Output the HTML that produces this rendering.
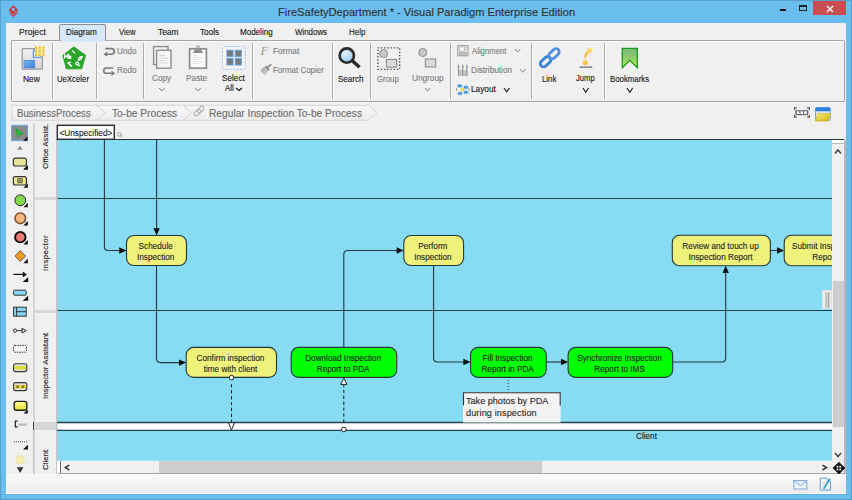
<!DOCTYPE html>
<html><head><meta charset="utf-8"><title>VP</title>
<style>
*{margin:0;padding:0;box-sizing:border-box}
html,body{width:852px;height:500px;overflow:hidden;background:#6abeee;font-family:"Liberation Sans",sans-serif;-webkit-text-stroke:0.12px}
.a{position:absolute}
.t{position:absolute;white-space:nowrap;line-height:12px;height:12px;font-size:7.9px;color:#1f1f1f}
.g{color:#8c8c8c}
.sep{position:absolute;top:43px;width:2px;height:55.5px;background:#adadad;border-right:1px solid #fbfbfb}
.chev{position:absolute;width:5px;height:5px;border-right:1.2px solid #444;border-bottom:1.2px solid #444;transform:rotate(45deg)}
.chev.g2{border-color:#9a9a9a}
.bc{position:absolute;white-space:nowrap;line-height:14px;height:14px;font-size:10px;color:#6e6e6e}
.dt{position:absolute;white-space:nowrap;font-size:8.2px;line-height:11px;color:#262626;text-align:center}
.vt{position:absolute;white-space:nowrap;font-size:7.9px;line-height:10px;color:#222;transform:rotate(-90deg);transform-origin:0 0}
</style></head><body>
<!-- window frame -->
<div class="a" style="left:0;top:0;width:852px;height:500px;background:#6abeee;border:1px solid #5b9fcc"></div>
<!-- title bar -->
<svg class="a" style="left:8px;top:4px" width="12" height="14" viewBox="8 4 12 14">
<path d="M13.4 5.3 L18 9.9 L13.4 14.5 L8.8 9.9 Z" fill="#db2a2a"/>
<path d="M13.2 7.3 L15.3 9.4 L13.2 11.5 L11.1 9.4 Z" fill="#6abeee"/>
<path d="M14.6 10.6 L16 11.4 L15 12.4 Z" fill="#6abeee"/>
<path d="M9.2 11.6 L13.4 15.8 L17.6 11.6" fill="none" stroke="#d83030" stroke-width="1"/>
<path d="M9.8 13.2 L13.4 16.8 L17 13.2" fill="none" stroke="#d83030" stroke-width="1"/>
</svg>
<div class="a" style="left:277.51px;top:4.96px;font-size:10.5px;line-height:14px;white-space:nowrap;color:#2e2e2e;transform:scaleX(1.057);transform-origin:0 0;">FireSafetyDepartment * - Visual Paradigm Enterprise Edition</div>
<div class="a" style="left:780px;top:9px;width:6px;height:2px;background:#111"></div>
<div class="a" style="left:799px;top:5px;width:8px;height:6px;border:1px solid #222;border-top-width:2px"></div>
<div class="a" style="left:813px;top:1px;width:34px;height:14px;background:#c74f4f"></div>
<svg class="a" style="left:826px;top:5px" width="8" height="8" viewBox="0 0 8 8"><path d="M1 1L7 7M7 1L1 7" stroke="#fff" stroke-width="1.4"/></svg>

<!-- content -->
<div class="a" style="left:6px;top:23px;width:840px;height:471px;background:#f0f0f0"></div>
<!-- tabs -->
<div class="a" style="left:59.2px;top:23.8px;width:46.8px;height:17.5px;background:#d6e7fa;border:1.3px solid #8e8e8e;border-bottom:none;border-radius:2.5px 2.5px 0 0"></div>


<!-- ribbon -->
<div class="a" style="left:11px;top:40px;width:834px;height:62px;border:1px solid #a2a2a2;border-top:1.5px solid #a4a4a4;border-bottom:1.5px solid #9c9c9c;border-radius:2px;background:#f0f0f0;box-shadow:0 1px 0 #fcfcfc, inset 1px 1px 0 #fbfbfb"></div>
<div class="a" style="left:60.5px;top:40px;width:44.2px;height:1.6px;background:#d6e7fa"></div>
<div class="sep" style="left:52px"></div>
<div class="sep" style="left:96px"></div>
<div class="sep" style="left:143px"></div>
<div class="sep" style="left:252px"></div>
<div class="sep" style="left:332px"></div>
<div class="sep" style="left:370px"></div>
<div class="sep" style="left:450px"></div>
<div class="sep" style="left:531px"></div>
<div class="sep" style="left:604px"></div>

<!-- New -->
<svg class="a" style="left:20px;top:45px" width="26" height="27" viewBox="20 45 26 27">
<defs><linearGradient id="gN" x1="0" y1="0" x2="0" y2="1"><stop offset="0" stop-color="#f3f3f3"/><stop offset="1" stop-color="#d2d2d2"/></linearGradient>
<linearGradient id="gB" x1="0" y1="0" x2="1" y2="1"><stop offset="0" stop-color="#7fb6f0"/><stop offset="1" stop-color="#3a7fd6"/></linearGradient></defs>
<rect x="22.2" y="48.6" width="20.2" height="20.6" rx="1" fill="url(#gN)" stroke="#9a9a9a" stroke-width="1.3"/>
<rect x="24" y="60.4" width="10.8" height="7.5" fill="url(#gB)" stroke="#3d7fd0" stroke-width=".6"/>
<rect x="33.4" y="50.3" width="7.6" height="7" fill="#e8f0fa" stroke="#4a8de0" stroke-width="1.1"/>
<rect x="35" y="46.6" width="9.4" height="9.6" fill="#fff6c0"/>
<g fill="#f0ac00"><rect x="35" y="46.6" width="2" height="2"/><rect x="38.7" y="46.6" width="2" height="2"/><rect x="42.4" y="46.6" width="2" height="2"/>
<rect x="35" y="50.4" width="2" height="2"/><rect x="38.7" y="50.4" width="2" height="2"/><rect x="42.4" y="50.4" width="2" height="2"/>
<rect x="35" y="54.2" width="2" height="2"/><rect x="38.7" y="54.2" width="2" height="2"/><rect x="42.4" y="54.2" width="2" height="2"/></g>
<g stroke="#f5c84a" stroke-width=".6"><path d="M35 49.5H44.4M35 53.3H44.4M36 46.6V56.2M39.7 46.6V56.2M43.4 46.6V56.2"/></g>
</svg>
<!-- UeXceler -->
<svg class="a" style="left:60px;top:45px" width="28" height="26" viewBox="60 45 28 26">
<path d="M73.9 46.9 L85.6 55.3 L81.7 68.8 L66.4 68.8 L62.8 55.3 Z" fill="#2aa52a" stroke="#2aa52a" stroke-width="1" stroke-linejoin="round"/>
<g fill="none" stroke="#fff" stroke-width="1.3"><path d="M72.2 50.6 L75 53.4"/><path d="M67.6 62.2 L71.8 66.6" stroke-width="1.8"/><path d="M70.6 61.6 L68.6 63.8"/><circle cx="77.3" cy="63.5" r="1.4"/><path d="M78.3 64.6 L80 66.2"/><path d="M78.5 60 Q79 56.6 82 56.6 Q81.5 59.8 78.5 60 Z"/></g>
<path d="M64.6 58.6 V54.8 L66.2 57 L67.8 54.8 V58.6 M69 54.4 V58.4 H70.8 V56.4 H69" fill="none" stroke="#fff" stroke-width="1.1"/>
</svg>
<!-- Undo / Redo -->
<svg class="a" style="left:102px;top:46px" width="15" height="31" viewBox="102 46 15 31">
<g fill="none" stroke="#7a7a7a" stroke-width="1.6"><path d="M105.2 48.6 H111.6 A2.8 2.8 0 0 1 111.6 54.2 H106.5"/><path d="M113.4 68 H106.4 A2.65 2.65 0 0 0 106.4 73.3 H111.5"/></g>
<path d="M103.5 54.2 L107.2 51.6 L107.2 56.8 Z" fill="#7a7a7a"/>
<path d="M115.2 73.3 L111.5 70.7 L111.5 75.9 Z" fill="#7a7a7a"/>
</svg>
<!-- Copy -->
<svg class="a" style="left:151px;top:45px" width="22" height="25" viewBox="151 45 22 25">
<rect x="153.6" y="46.6" width="14.4" height="17.8" fill="#f3f3f3" stroke="#8c8c8c" stroke-width="1.4"/>
<rect x="156.6" y="50.3" width="14.4" height="17.9" fill="#f6f6f6" stroke="#8c8c8c" stroke-width="1.4"/>
<g stroke="#c4c4c4" stroke-width=".7"><path d="M159.5 55.5H164.5M159.5 58H168M159.5 60.5H165M159.5 63H168"/></g>
</svg>
<!-- Paste -->
<svg class="a" style="left:187px;top:44px" width="22" height="27" viewBox="187 44 22 27">
<rect x="189.6" y="48.8" width="16.8" height="19.4" fill="#fafafa" stroke="#8c8c8c" stroke-width="1.7"/>
<path d="M193 53 L194.8 49.5 L201.2 49.5 L203 53 Z" fill="#8c8c8c"/>
<circle cx="198" cy="47.4" r="1.4" fill="none" stroke="#8c8c8c" stroke-width="1"/>
<g stroke="#d2d2d2" stroke-width=".6"><path d="M193 55.5H197M193 57.5H202M193 59.5H200M193 61.5H202M193 63.5H199"/></g>
</svg>
<!-- Select All -->
<svg class="a" style="left:221px;top:45px" width="26" height="26" viewBox="221 45 26 26">
<rect x="222.4" y="46.5" width="22.8" height="22.8" rx="1.5" fill="#f5f5f5" stroke="#a6c2ee" stroke-width="1" stroke-dasharray="2.2 1.3"/>
<g fill="#7a7a7a" stroke="#5ea2e6" stroke-width=".9"><rect x="226.9" y="50.2" width="6.2" height="6.5"/><rect x="235.2" y="50.2" width="6.2" height="6.5"/><rect x="226.9" y="58.5" width="6.2" height="6.5"/><rect x="235.2" y="58.5" width="6.2" height="6.5"/></g>
</svg>
<!-- Format F -->
<div class="a" style="left:260.6px;top:43.6px;font-family:'Liberation Serif',serif;font-style:italic;font-size:12.6px;line-height:14px;color:#9a9a9a;-webkit-text-stroke:0">F</div>
<!-- Format copier -->
<svg class="a" style="left:259px;top:64px" width="14" height="13" viewBox="259 64 14 13">
<defs><linearGradient id="gFC" x1="0" y1="0" x2="1" y2="1"><stop offset="0" stop-color="#a0a0a0"/><stop offset="1" stop-color="#d8d8d8"/></linearGradient></defs>
<path d="M260.4 70.4 L264.2 66.8 L268.6 71.2 L264.8 75.4 Z" fill="url(#gFC)"/>
<path d="M264.6 67 L266.2 65.6 L269.8 69.2 L268.4 70.8 Z" fill="#8a8a8a"/>
<path d="M268 67.2 L270.8 64.6" stroke="#8c8c8c" stroke-width="1.6" stroke-linecap="round"/>
</svg>
<!-- Search -->
<svg class="a" style="left:336px;top:45px" width="28" height="26" viewBox="336 45 28 26">
<defs><radialGradient id="gS" cx=".4" cy=".35" r=".7"><stop offset="0" stop-color="#e6f4ff"/><stop offset="1" stop-color="#8ec6ef"/></radialGradient></defs>
<circle cx="346.8" cy="55.6" r="7.2" fill="url(#gS)" stroke="#2a2a2a" stroke-width="2.6"/>
<path d="M352.2 60.8 L359.6 67.2" stroke="#2a2a2a" stroke-width="3.5" stroke-linecap="butt"/>
</svg>
<!-- Group -->
<svg class="a" style="left:376px;top:46px" width="26" height="25" viewBox="376 46 26 25">
<rect x="377.9" y="47.9" width="21.8" height="21.4" fill="none" stroke="#4a4a4a" stroke-width="1.3" stroke-dasharray="1.4 1.8"/>
<circle cx="383.6" cy="53.6" r="4" fill="#c9c9c9" stroke="#8a8a8a" stroke-width="1"/>
<rect x="386.4" y="59.4" width="10.2" height="7.8" fill="#d9d9d9" stroke="#8a8a8a" stroke-width="1"/>
</svg>
<!-- Ungroup -->
<svg class="a" style="left:416px;top:46px" width="22" height="23" viewBox="416 46 22 23">
<circle cx="422.8" cy="52.5" r="4" fill="#c9c9c9" stroke="#8a8a8a" stroke-width="1"/>
<rect x="425.3" y="59" width="10.4" height="8" fill="#d9d9d9" stroke="#8a8a8a" stroke-width="1"/>
</svg>
<!-- Alignment / Distribution / Layout -->
<svg class="a" style="left:455px;top:44px" width="16" height="52" viewBox="455 44 16 52">
<rect x="457.8" y="45.6" width="10.2" height="10.2" fill="#ececec" stroke="#9a9a9a" stroke-width="1"/>
<rect x="459.4" y="47" width="5" height="4" fill="#fff" stroke="#a8a8a8" stroke-width=".7"/>
<path d="M465 47.5H467M465 49.5H467" stroke="#b0b0b0" stroke-width=".7"/>
<rect x="459" y="52.2" width="8" height="1.3" fill="#9c9c9c"/><rect x="459" y="54.1" width="8" height="1" fill="#b0b0b0"/>
<g stroke="#8e8e8e" stroke-width="1.1"><path d="M458.5 64.5V76M462.7 64.5V76M466.9 64.5V76"/></g>
<g stroke="#9a9a9a" stroke-width="1"><path d="M457.6 67H459.8M461.8 67H464M466 67H468.2"/></g>
<rect x="458" y="70" width="9.5" height="6" fill="#a0a0a0" opacity=".55"/>
<g fill="#4aa4e4" stroke="#2f80c8" stroke-width=".4"><rect x="457.6" y="84.6" width="4.2" height="2.6" rx="1.2"/><rect x="463.8" y="86" width="4.2" height="2.6" rx="1.2"/><rect x="457.8" y="92.2" width="4.2" height="2.6" rx="1.2"/><rect x="463.8" y="91" width="4.2" height="2.6" rx="1.2"/></g>
<rect x="460.6" y="88.2" width="3.6" height="3" fill="#e6da40"/>
<path d="M456.5 88.5V90.5M469 88.5V90.5" stroke="#555" stroke-width=".8"/>
</svg>
<!-- Link -->
<svg class="a" style="left:536px;top:45px" width="27" height="26" viewBox="536 45 27 26">
<g fill="none" stroke-width="2.8"><rect x="539.6" y="58.55" width="12" height="6.5" rx="3.25" transform="rotate(-43 545.6 61.8)" stroke="#3a80d4"/><rect x="548" y="50.45" width="12" height="6.5" rx="3.25" transform="rotate(-43 554 53.7)" stroke="#4b91e2"/></g>
</svg>
<!-- Jump -->
<svg class="a" style="left:577px;top:44px" width="18" height="26" viewBox="577 44 18 26">
<defs><linearGradient id="gJ" x1="0" y1="1" x2="1" y2="0"><stop offset="0" stop-color="#f0a820"/><stop offset="1" stop-color="#fff08a"/></linearGradient>
<radialGradient id="gJd" cx=".4" cy=".4" r=".7"><stop offset="0" stop-color="#ffe45a"/><stop offset="1" stop-color="#f0a010"/></radialGradient></defs>
<path d="M584.9 58.8 C584 54.5 585.4 51.6 588.4 50.2 L587 48.2 L593.2 47.6 L591.4 53.8 L590.2 52.2 C587.8 53.4 586 55.6 585.6 58.8 Z" fill="url(#gJ)"/>
<circle cx="585.3" cy="62.7" r="2.4" fill="url(#gJd)"/>
<rect x="579.5" y="66.4" width="12.8" height="1.5" fill="#808080"/>
</svg>
<!-- Bookmarks -->
<svg class="a" style="left:620px;top:46px" width="20" height="24" viewBox="620 46 20 24">
<defs><linearGradient id="gK" x1="0" y1="0" x2="0" y2="1"><stop offset="0" stop-color="#7ab87e"/><stop offset=".55" stop-color="#8fcf6a"/><stop offset="1" stop-color="#d0f060"/></linearGradient></defs>
<path d="M622.3 48.4 H637.3 V67.8 L629.8 60.3 L622.3 67.8 Z" fill="url(#gK)" stroke="#179a17" stroke-width="1.3" stroke-linejoin="miter"/>
</svg>


<!-- RIBBON_TEXT_START -->
<div class="a" style="left:18.81px;top:25.09px;font-size:8.4px;line-height:14px;white-space:nowrap;color:#161616;transform:scaleX(1.030);transform-origin:0 0;">Project</div>
<div class="a" style="left:66.34px;top:25.09px;font-size:8.4px;line-height:14px;white-space:nowrap;color:#161616;transform:scaleX(0.976);transform-origin:0 0;">Diagram</div>
<div class="a" style="left:119.00px;top:25.09px;font-size:8.4px;line-height:14px;white-space:nowrap;color:#161616;transform:scaleX(0.916);transform-origin:0 0;">View</div>
<div class="a" style="left:157.83px;top:25.09px;font-size:8.4px;line-height:14px;white-space:nowrap;color:#161616;transform:scaleX(0.993);transform-origin:0 0;">Team</div>
<div class="a" style="left:200.04px;top:25.09px;font-size:8.4px;line-height:14px;white-space:nowrap;color:#161616;transform:scaleX(0.980);transform-origin:0 0;">Tools</div>
<div class="a" style="left:240.46px;top:25.09px;font-size:8.4px;line-height:14px;white-space:nowrap;color:#161616;transform:scaleX(0.959);transform-origin:0 0;">Modeling</div>
<div class="a" style="left:295.20px;top:25.09px;font-size:8.4px;line-height:14px;white-space:nowrap;color:#161616;transform:scaleX(0.943);transform-origin:0 0;">Windows</div>
<div class="a" style="left:348.96px;top:25.09px;font-size:8.4px;line-height:14px;white-space:nowrap;color:#161616;transform:scaleX(0.951);transform-origin:0 0;">Help</div>
<div class="a" style="left:23.12px;top:71.59px;font-size:8.4px;line-height:14px;white-space:nowrap;color:#161616;transform:scaleX(1.012);transform-origin:0 0;">New</div>
<div class="a" style="left:57.05px;top:71.59px;font-size:8.4px;line-height:14px;white-space:nowrap;color:#161616;transform:scaleX(0.928);transform-origin:0 0;">UeXceler</div>
<div class="a" style="left:117.23px;top:44.09px;font-size:8.4px;line-height:14px;white-space:nowrap;color:#7c7c7c;transform:scaleX(0.974);transform-origin:0 0;">Undo</div>
<div class="a" style="left:117.14px;top:63.29px;font-size:8.4px;line-height:14px;white-space:nowrap;color:#7c7c7c;transform:scaleX(0.979);transform-origin:0 0;">Redo</div>
<div class="a" style="left:151.59px;top:70.89px;font-size:8.4px;line-height:14px;white-space:nowrap;color:#7c7c7c;transform:scaleX(0.980);transform-origin:0 0;">Copy</div>
<div class="a" style="left:186.33px;top:71.09px;font-size:8.4px;line-height:14px;white-space:nowrap;color:#7c7c7c;transform:scaleX(0.990);transform-origin:0 0;">Paste</div>
<div class="a" style="left:222.17px;top:70.84px;font-size:8.4px;line-height:14px;white-space:nowrap;color:#161616;transform:scaleX(0.977);transform-origin:0 0;">Select</div>
<div class="a" style="left:224.75px;top:80.84px;font-size:8.4px;line-height:14px;white-space:nowrap;color:#161616;transform:scaleX(0.936);transform-origin:0 0;">All</div>
<div class="a" style="left:273.23px;top:43.99px;font-size:8.4px;line-height:14px;white-space:nowrap;color:#7c7c7c;transform:scaleX(0.990);transform-origin:0 0;">Format</div>
<div class="a" style="left:273.26px;top:62.99px;font-size:8.4px;line-height:14px;white-space:nowrap;color:#7c7c7c;transform:scaleX(0.951);transform-origin:0 0;">Format Copier</div>
<div class="a" style="left:338.08px;top:71.59px;font-size:8.4px;line-height:14px;white-space:nowrap;color:#161616;transform:scaleX(0.957);transform-origin:0 0;">Search</div>
<div class="a" style="left:377.11px;top:71.59px;font-size:8.4px;line-height:14px;white-space:nowrap;color:#7c7c7c;transform:scaleX(0.937);transform-origin:0 0;">Group</div>
<div class="a" style="left:411.62px;top:70.59px;font-size:8.4px;line-height:14px;white-space:nowrap;color:#7c7c7c;transform:scaleX(0.983);transform-origin:0 0;">Ungroup</div>
<div class="a" style="left:472.10px;top:43.99px;font-size:8.4px;line-height:14px;white-space:nowrap;color:#7c7c7c;transform:scaleX(0.926);transform-origin:0 0;">Alignment</div>
<div class="a" style="left:471.44px;top:63.29px;font-size:8.4px;line-height:14px;white-space:nowrap;color:#7c7c7c;transform:scaleX(0.979);transform-origin:0 0;">Distribution</div>
<div class="a" style="left:471.44px;top:82.49px;font-size:8.4px;line-height:14px;white-space:nowrap;color:#161616;transform:scaleX(0.985);transform-origin:0 0;">Layout</div>
<div class="a" style="left:541.67px;top:71.59px;font-size:8.4px;line-height:14px;white-space:nowrap;color:#161616;transform:scaleX(0.931);transform-origin:0 0;">Link</div>
<div class="a" style="left:575.72px;top:71.09px;font-size:8.4px;line-height:14px;white-space:nowrap;color:#161616;transform:scaleX(0.913);transform-origin:0 0;">Jump</div>
<div class="a" style="left:609.77px;top:71.59px;font-size:8.4px;line-height:14px;white-space:nowrap;color:#161616;transform:scaleX(0.935);transform-origin:0 0;">Bookmarks</div>
<svg class="a" style="left:157.00px;top:86.00px" width="9.80" height="7.00"><polyline points="2,2 4.90,5.00 7.80,2" fill="none" stroke="#7c7c7c" stroke-width="0.95"/></svg>
<svg class="a" style="left:192.50px;top:86.00px" width="9.80" height="7.00"><polyline points="2,2 4.90,5.00 7.80,2" fill="none" stroke="#7c7c7c" stroke-width="0.95"/></svg>
<svg class="a" style="left:234.00px;top:86.25px" width="10.00" height="6.50"><polyline points="2,2 5.00,4.50 8.00,2" fill="none" stroke="#161616" stroke-width="1.15"/></svg>
<svg class="a" style="left:423.10px;top:85.80px" width="9.00" height="7.10"><polyline points="2,2 4.50,5.10 7.00,2" fill="none" stroke="#7c7c7c" stroke-width="0.95"/></svg>
<svg class="a" style="left:512.70px;top:47.40px" width="9.30" height="7.00"><polyline points="2,2 4.65,5.00 7.30,2" fill="none" stroke="#7c7c7c" stroke-width="0.95"/></svg>
<svg class="a" style="left:517.80px;top:66.60px" width="9.40" height="7.30"><polyline points="2,2 4.70,5.30 7.40,2" fill="none" stroke="#7c7c7c" stroke-width="0.95"/></svg>
<svg class="a" style="left:502.20px;top:85.70px" width="9.40" height="7.80"><polyline points="2,2 4.70,5.80 7.40,2" fill="none" stroke="#161616" stroke-width="1.15"/></svg>
<svg class="a" style="left:580.60px;top:85.60px" width="9.60" height="8.20"><polyline points="2,2 4.80,6.20 7.60,2" fill="none" stroke="#161616" stroke-width="1.15"/></svg>
<svg class="a" style="left:624.80px;top:85.60px" width="9.70" height="8.20"><polyline points="2,2 4.85,6.20 7.70,2" fill="none" stroke="#161616" stroke-width="1.15"/></svg>
<!-- RIBBON_TEXT_END -->

<!-- breadcrumb -->
<svg class="a" style="left:10px;top:104px" width="372" height="18" viewBox="10 104 372 18">
<defs><linearGradient id="gBC" x1="0" y1="0" x2="0" y2="1"><stop offset="0" stop-color="#f7f7f7"/><stop offset="1" stop-color="#ededed"/></linearGradient></defs>
<path d="M11.8 105.3 H368.4 L377 112.8 L368.4 120.3 H11.8 Z" fill="url(#gBC)" stroke="#d6d6d6" stroke-width="1"/>
<path d="M96.5 105.3 L105.3 112.8 L96.5 120.3 M183 105.3 L191.8 112.8 L183 120.3" fill="none" stroke="#d2d2d2" stroke-width="1"/>
<g fill="none" stroke="#b5b5b5" stroke-width="1.2"><rect x="193.6" y="110.5" width="7.5" height="4" rx="2" transform="rotate(-45 197.4 112.5)"/><rect x="197" y="107.6" width="7.5" height="4" rx="2" transform="rotate(-45 200.7 109.6)"/></g>
</svg>
<!-- BC_START -->
<div class="a" style="left:16.83px;top:106.46px;font-size:10.5px;line-height:14px;white-space:nowrap;color:#6a6a6a;transform:scaleX(0.915);transform-origin:0 0;">BusinessProcess</div>
<div class="a" style="left:111.90px;top:106.36px;font-size:10.5px;line-height:14px;white-space:nowrap;color:#6a6a6a;transform:scaleX(0.970);transform-origin:0 0;">To-be Process</div>
<div class="a" style="left:209.48px;top:106.36px;font-size:10.5px;line-height:14px;white-space:nowrap;color:#6a6a6a;transform:scaleX(0.972);transform-origin:0 0;">Regular Inspection To-be Process</div>
<!-- BC_END -->
<!-- fit + folder icons -->
<svg class="a" style="left:792px;top:105px" width="42" height="18" viewBox="792 105 42 18">
<g fill="none" stroke="#555" stroke-width="1.2"><path d="M794.5 110V107.8H796.8M807.2 107.8H809.4V110M794.5 115V117.2H796.8M807.2 117.2H809.4V115"/></g>
<rect x="795.3" y="110.2" width="13" height="5" fill="#6a6a6a"/>
<g fill="#fff"><rect x="796.8" y="111.4" width="2.6" height="2.6"/><rect x="800.5" y="111.4" width="2.6" height="2.6"/><rect x="804.2" y="111.4" width="2.6" height="2.6"/></g>
<defs><linearGradient id="gF" x1="0" y1="0" x2="1" y2="1"><stop offset="0" stop-color="#f6ec88"/><stop offset="1" stop-color="#d0b400"/></linearGradient></defs>
<rect x="815.6" y="107.6" width="14.6" height="12.8" rx="1" fill="#eef4fb" stroke="#3e86dc" stroke-width=".8"/>
<rect x="815.6" y="107.6" width="14.6" height="3.6" fill="#2f7fe0"/>
<path d="M815.6 111.8H830" stroke="#9cc0ee" stroke-width=".8"/>
<path d="M817.8 113.6 H830.6 L828 121 H815.3 Z" fill="url(#gF)" stroke="#c0a400" stroke-width=".6"/>
</svg>

<!-- palette -->
<svg class="a" style="left:6px;top:122px" width="28" height="352" viewBox="6 122 28 352">
<rect x="11.5" y="125.3" width="16" height="15.4" fill="#8a8a8a" stroke="#6aa8e8" stroke-width="1"/>
<path d="M15.7 128.3 L23.6 133.9 L19.7 134.6 L18 137.6 Z" fill="#22c43a" stroke="#118822" stroke-width=".5"/>
<path d="M27.5 136.4 V140.7 H23.2 Z" fill="#111"/>
<path d="M17.1 149.7 L19.9 145.8 L22.7 149.7 Z" fill="#8c8c8c"/>
<g id="tri"><path d="M27.8 165.2 V169.6 H23.4 Z" fill="#111"/></g>
<rect x="13.4" y="158.2" width="13" height="7.8" rx="2" fill="#e6e394" stroke="#333" stroke-width="1.2"/>
<path d="M27.8 165.2 V169.6 H23.4 Z" fill="#111"/>
<rect x="13.4" y="176.6" width="13" height="8.4" rx="2" fill="#f0e98c" stroke="#333" stroke-width="1.2"/>
<rect x="17.8" y="178.8" width="4.4" height="4" fill="none" stroke="#333" stroke-width=".8"/><path d="M20 178.8V182.8M17.8 180.8H22.2" stroke="#333" stroke-width=".6"/>
<path d="M27.8 183.4 V187.8 H23.4 Z" fill="#111"/>
<circle cx="20.3" cy="200.3" r="5.4" fill="#80d850" stroke="#222" stroke-width="1"/>
<path d="M27.8 202.8 V207.2 H23.4 Z" fill="#111"/>
<circle cx="20.3" cy="218.3" r="5.3" fill="#f8b880" stroke="#7a5030" stroke-width="1.6"/>
<path d="M27.8 221 V225.4 H23.4 Z" fill="#111"/>
<circle cx="20.3" cy="237.2" r="5.2" fill="#f07878" stroke="#111" stroke-width="1.9"/>
<path d="M27.8 240 V244.4 H23.4 Z" fill="#111"/>
<path d="M20.3 250.6 L25.6 256 L20.3 261.4 L15 256 Z" fill="#f59a20" stroke="#444" stroke-width=".8"/>
<path d="M27.8 258.8 V263.2 H23.4 Z" fill="#111"/>
<path d="M13.5 274.4 H24" stroke="#111" stroke-width="1.2"/><path d="M26.8 274.4 L22.8 271.4 L22.8 277.4 Z" fill="#111"/>
<path d="M28.2 277.2 V282 H22.6 Z" fill="#111"/>
<rect x="13.6" y="290.2" width="12.6" height="5" rx="1" fill="#86d8f6" stroke="#333" stroke-width="1"/>
<path d="M28.2 295.8 V300.8 H22.6 Z" fill="#111"/>
<rect x="13.6" y="307.2" width="12.6" height="9" fill="#82d4f2" stroke="#333" stroke-width="1"/>
<path d="M16.6 307.2V316.2M16.6 311.7H26.2" stroke="#333" stroke-width="1"/>
<circle cx="15" cy="330.6" r="1.6" fill="#fff" stroke="#222" stroke-width="1"/>
<path d="M16.6 330.6 H22" stroke="#333" stroke-width="1"/>
<path d="M22 328.3 L26.2 330.6 L22 332.9 Z" fill="#fff" stroke="#222" stroke-width="1"/>
<rect x="13.6" y="345.4" width="12.8" height="6.8" rx="1.2" fill="#f6f6f6" stroke="#333" stroke-width="1" stroke-dasharray="1.5 1"/>
<rect x="13.6" y="363.8" width="13.2" height="7.8" rx="2" fill="#e2e2e2" stroke="#3a3a3a" stroke-width="1.1"/>
<rect x="14.4" y="366" width="11.6" height="3.4" fill="#d8e034"/>
<rect x="13.6" y="382.6" width="13.2" height="8" rx="2" fill="#e2e2e2" stroke="#3a3a3a" stroke-width="1.1"/>
<rect x="14.4" y="384.9" width="11.6" height="3.6" fill="#e2d040"/>
<rect x="16.5" y="385.5" width="2" height="2.4" fill="#6a6020"/><rect x="21.8" y="385.5" width="2" height="2.4" fill="#6a6020"/>
<defs><linearGradient id="gNt" x1="0" y1="0" x2="0" y2="1"><stop offset="0" stop-color="#ffff90"/><stop offset="1" stop-color="#e6de3a"/></linearGradient></defs>
<rect x="14.2" y="401.4" width="12.6" height="8.8" rx="2.2" fill="url(#gNt)" stroke="#1e1e1e" stroke-width="1.4"/>
<path d="M27.8 409.4 V413.4 H23.4 Z" fill="#111"/>
<path d="M17.6 421.2 H15.3 V426.8 H17.6" fill="none" stroke="#222" stroke-width="1.2"/>
<path d="M18.4 424.5 H26.8" stroke="#b4b4b4" stroke-width="2"/>
<path d="M14 441.8 H27" stroke="#444" stroke-width="1" stroke-dasharray="1 1"/>
<path d="M28 444.8 V449.6 H23 Z" fill="#111"/>
<path d="M16.5 455.8 H21.8 L24.2 458.2 V463.4 H16.5 Z" fill="#f4ecb0" stroke="#e0d8a0" stroke-width=".5"/>
<circle cx="27" cy="463" r=".4" fill="#999"/>
<path d="M16.9 467.2 H23.4 L20.15 473 Z" fill="#333"/>
</svg>
<!-- palette/header separators -->
<div class="a" style="left:32.6px;top:123px;width:2px;height:351px;background:#d4d4d4"></div>
<div class="a" style="left:34.6px;top:123px;width:21px;height:351px;background:#f0f0f0"></div>
<div class="a" style="left:55.6px;top:139px;width:2px;height:335px;background:#c4c4c4"></div>
<div class="a" style="left:34.6px;top:197px;width:21px;height:3px;background:#d8d8d8"></div>
<div class="a" style="left:34.6px;top:309.5px;width:21px;height:3px;background:#d8d8d8"></div>
<div class="a" style="left:34.6px;top:422px;width:21px;height:8px;background:#d6d6d6"></div>
<div class="a" style="left:32.8px;top:422px;width:1.2px;height:8px;background:#444"></div>
<div class="a" style="left:33px;top:430px;width:1px;height:44px;background:#c8c8c8"></div>
<div class="vt" style="left:41px;top:168.5px">Office Assist.</div>
<div class="vt" style="left:41px;top:271px;letter-spacing:.4px">Inspector</div>
<div class="vt" style="left:41px;top:398.5px">Inspector Assistant</div>
<div class="vt" style="left:41px;top:470px">Client</div>


<svg class="a" style="left:0;top:0" width="852" height="500" viewBox="0 0 852 500">
<!-- unspecified header -->
<rect x="57.3" y="125.3" width="57" height="14" fill="#fff" stroke="#333" stroke-width="1.5"/>
<g fill="none" stroke="#777" stroke-width=".7"><circle cx="119.4" cy="134.4" r="1.8"/><path d="M120.7 135.7 L122.3 137.3"/></g>
<!-- canvas -->
<rect x="57.6" y="139.6" width="774.4" height="321.2" fill="#87dcf4"/>
<path d="M57 139.5 H844" stroke="#22363f" stroke-width="1.2"/>
<path d="M57.6 198.5 H832 M57.6 310.5 H832" stroke="#24404a" stroke-width="1.15"/>
<!-- pool Client -->
<rect x="57.6" y="422.4" width="774.4" height="8" fill="#fff"/>
<path d="M57 422.5 H832 M57 430.3 H832" stroke="#24404a" stroke-width="1.3"/>
<!-- connectors -->
<g fill="none" stroke="#22363f" stroke-width="1.1">
<path d="M104.4 139.6 V246.5 Q104.4 250.5 108.4 250.5 H120"/>
<path d="M156.6 139.6 V229"/>
<path d="M156.5 265.5 V358.6 Q156.5 362.6 160.5 362.6 H180"/>
<path d="M343.8 347.3 V254.5 Q343.8 250.5 347.8 250.5 H397"/>
<path d="M433.6 265.5 V358 Q433.6 362 437.6 362 H464"/>
<path d="M546.2 362 H562"/>
<path d="M672.7 362 H721.7 Q725.7 362 725.7 358 V272"/>
<path d="M770.4 250.5 H778"/>
</g>
<g fill="#111">
<path d="M126.4 250.5 L119.2 247.3 L119.2 253.7 Z"/>
<path d="M156.6 235.4 L153.4 228.2 L159.8 228.2 Z"/>
<path d="M186.2 362.6 L179 359.4 L179 365.8 Z"/>
<path d="M403.8 250.5 L396.6 247.3 L396.6 253.7 Z"/>
<path d="M470.6 362 L463.4 358.8 L463.4 365.2 Z"/>
<path d="M568.2 362 L561 358.8 L561 365.2 Z"/>
<path d="M725.7 265.8 L722.5 273 L728.9 273 Z"/>
<path d="M784.2 250.5 L777 247.3 L777 253.7 Z"/>
</g>
<!-- message flows -->
<g fill="none" stroke="#222" stroke-width="1.05" stroke-dasharray="3.4 2.5">
<path d="M231.5 384.2 V422"/>
<path d="M343.8 422.6 V385"/>
</g>
<path d="M228.4 422.8 L231.5 429.8 L234.6 422.8" fill="none" stroke="#222" stroke-width="1"/>
<path d="M340.6 384.4 L343.8 378.4 L347 384.4 Z" fill="#fff" stroke="#222" stroke-width="1"/>
<!-- association dotted -->
<path d="M508.2 380 V392" stroke="#333" stroke-width="1" stroke-dasharray="1 2"/>
<!-- tasks -->
<g stroke="#22363f" stroke-width="1.1">
<rect x="126.5" y="235.5" width="60" height="30" rx="7.4" fill="#eef27a"/>
<rect x="403.8" y="235.5" width="59.8" height="30" rx="7.4" fill="#eef27a"/>
<rect x="672.3" y="235.3" width="98.1" height="30.5" rx="7.4" fill="#eef27a"/>
<rect x="784.2" y="235.3" width="80.8" height="30.5" rx="7.4" fill="#eef27a"/>
<rect x="186.2" y="347.4" width="90.3" height="30" rx="7.4" fill="#eef27a"/>
<rect x="291.2" y="347.4" width="105.5" height="30" rx="7.4" fill="#00ff00"/>
<rect x="470.6" y="347.4" width="75.6" height="30" rx="7.4" fill="#00ff00"/>
<rect x="568.1" y="347.4" width="104.6" height="30" rx="7.4" fill="#00ff00"/>
</g>
<circle cx="231.5" cy="377.6" r="2.3" fill="#fff" stroke="#222" stroke-width="1"/>
<circle cx="343.8" cy="429.5" r="2.3" fill="#fff" stroke="#222" stroke-width="1"/>
<!-- annotation -->
<rect x="463" y="392.3" width="97.6" height="30.2" fill="#f3f3f3"/>
<path d="M463.5 405.5 V392.8 H560.2 V405.5" fill="none" stroke="#333" stroke-width="1.1"/>
</svg>
<!-- task labels -->
<div class="dt" style="left:115.7px;top:240.7px;width:80px">Schedule<br>Inspection</div>
<div class="dt" style="left:392.9px;top:240.7px;width:80px">Perform<br>Inspection</div>
<div class="dt" style="left:660.5px;top:240.7px;width:120px">Review and touch up<br>Inspection Report</div>
<div class="dt" style="left:784.6px;top:240.7px;width:80px">Submit Inspection<br>Report</div>
<div class="dt" style="left:170.5px;top:352.7px;width:120px">Confirm inspection<br>time with client</div>
<div class="dt" style="left:283.2px;top:352.7px;width:120px">Download Inspection<br>Report to PDA</div>
<div class="dt" style="left:447.6px;top:352.7px;width:120px">Fill Inspection<br>Report in PDA</div>
<div class="dt" style="left:559.6px;top:352.7px;width:120px">Synchronize Inspection<br>Report to IMS</div>
<div class="a" style="left:466px;top:395.8px;font-size:9.1px;line-height:11.8px;white-space:nowrap;color:#2a2a2a">Take photos by PDA<br><span style="letter-spacing:.12px">during inspection</span></div>
<div class="t" style="left:59.4px;top:127.3px;font-size:8.3px;color:#1a1a1a">&lt;Unspecified&gt;</div>
<div class="t" style="left:636px;top:431.1px;font-size:8.2px;color:#222">Client</div>
<!-- scrollbars -->
<div class="a" style="left:832px;top:140.2px;width:12px;height:321px;background:#f0f0f0"></div>
<div class="a" style="left:832px;top:140.2px;width:12px;height:3.4px;background:#fff;border-bottom:1px solid #bbb"></div>
<div class="a" style="left:833px;top:281.2px;width:10.6px;height:146px;background:#cdcdcd"></div>
<svg class="a" style="left:833.2px;top:147.5px" width="10" height="8"><polyline points="2,5.6 5,2 8,5.6" fill="none" stroke="#444" stroke-width="1.5"/></svg>
<svg class="a" style="left:833.2px;top:450.5px" width="10" height="8"><polyline points="2,2 5,5.6 8,2" fill="none" stroke="#444" stroke-width="1.5"/></svg>
<div class="a" style="left:822.2px;top:290.1px;width:9.9px;height:19.2px;background:#ededed;border:1px solid #e0e0e0"></div>
<div class="a" style="left:824.6px;top:292.2px;width:5.7px;height:15.6px;background:linear-gradient(90deg,#bdbdbd,#d6d6d6 70%,#a9a9a9 71%,#a9a9a9);border:.6px solid #cfcfcf"></div>
<div class="a" style="left:57.6px;top:460.8px;width:774.4px;height:13px;background:#f0f0f0"></div>
<div class="a" style="left:158.7px;top:461.4px;width:383.1px;height:12px;background:#cdcdcd"></div>
<div class="a" style="left:57px;top:461.2px;width:3.2px;height:12.4px;background:#fff"></div>
<div class="a" style="left:60px;top:461.2px;width:1.3px;height:13px;background:#666"></div>
<svg class="a" style="left:63px;top:463px" width="9" height="9"><polyline points="6.3,2.2 2.3,4.6 6.3,7" fill="none" stroke="#333" stroke-width="1.5"/></svg>
<svg class="a" style="left:820px;top:463px" width="9" height="9"><polyline points="2.5,2.2 6.5,4.6 2.5,7" fill="none" stroke="#333" stroke-width="1.5"/></svg>
<div class="a" style="left:57.5px;top:473.2px;width:788px;height:1.2px;background:#a8a8a8"></div>
<div class="a" style="left:844px;top:139.6px;width:2px;height:335px;background:#b8b8b8"></div>
<svg class="a" style="left:832px;top:461px" width="14" height="14" viewBox="832 461 14 14">
<path d="M838.9 462.2 L844.8 468.1 L838.9 474 L833 468.1 Z" fill="#111" stroke="#111" stroke-width=".8" stroke-linejoin="round"/>
<g fill="#fff"><rect x="836.6" y="465.8" width="1.8" height="1.8"/><rect x="839.4" y="465.8" width="1.8" height="1.8"/><rect x="836.6" y="468.6" width="1.8" height="1.8"/><rect x="839.4" y="468.6" width="1.8" height="1.8"/></g>
</svg>
<!-- status bar -->
<div class="a" style="left:6px;top:474.4px;width:840px;height:19.6px;background:linear-gradient(#fafafa,#ebebeb);border-bottom:1px solid #fdfdfd;box-shadow:inset 1px 0 0 #fff"></div>
<svg class="a" style="left:790px;top:476px" width="45" height="16" viewBox="790 476 45 16">
<rect x="793.8" y="480.6" width="13" height="8.4" fill="#eef3fa" stroke="#7aa6d8" stroke-width="1"/>
<path d="M793.8 480.8 L800.3 485.6 L806.8 480.8" fill="none" stroke="#7aa6d8" stroke-width="1"/>
<path d="M820.3 478.2 H827 L830.5 481.7 V490 H820.3 Z" fill="#fbfbfb" stroke="#5f9be0" stroke-width="1"/>
<path d="M827 478.2 V481.7 H830.5" fill="#dfe9f6" stroke="#5f9be0" stroke-width=".6"/>
<path d="M822 482.5H826M822 484.5H828.5M822 486.5H828.5M822 488.4H826" stroke="#c8c8c8" stroke-width=".7"/>
<path d="M823.6 488.6 L830 479" stroke="#2aa0b4" stroke-width="1.6"/>
</svg>

<div class="a" style="left:846px;top:0;width:6px;height:500px;background:#6abeee;border-right:1px solid #4f9dcc;border-top:1px solid #5b9fcc"></div>
<div class="a" style="left:0;top:494px;width:852px;height:6px;background:#6abeee;border-bottom:1px solid #4f9dcc;border-left:1px solid #4f9dcc;border-right:1px solid #4f9dcc;border-top:1px solid #5eaedf"></div>
</body></html>
